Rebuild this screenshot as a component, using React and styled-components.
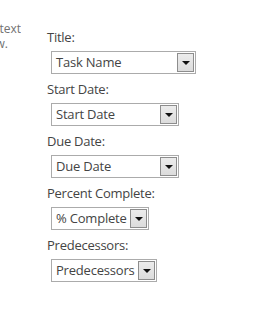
import styled, { createGlobalStyle } from "styled-components";

const GlobalStyle = createGlobalStyle`
  body {
    margin: 0;
    background: #ffffff;
    font-family: "Open Sans", "Noto Sans", sans-serif;
  }
`;

const fields = [
  { label: "Title:", value: "Task Name", width: 145 },
  { label: "Start Date:", value: "Start Date", width: 128 },
  { label: "Due Date:", value: "Due Date", width: 128 },
  { label: "Percent Complete:", value: "% Complete", width: 98 },
  { label: "Predecessors:", value: "Predecessors", width: 106 },
];

function App() {
  return (
    <Page>
      <GlobalStyle />
      <Note>
        <NoteText>
          <NoteLine>Choose the list columns that map to each text</NoteLine>
          <NoteLine>field of the task timeline view.</NoteLine>
        </NoteText>
      </Note>
      <Form>
        {fields.map((f) => (
          <Field key={f.label}>
            <Label>{f.label}</Label>
            <Select $width={f.width}>
              <Value>{f.value}</Value>
              <ArrowButton>
                <Arrow />
              </ArrowButton>
            </Select>
          </Field>
        ))}
      </Form>
    </Page>
  );
}

const Page = styled.div`
  width: 266px;
  height: 319px;
  display: flex;
  overflow: hidden;
`;

const Note = styled.div`
  width: 21px;
  flex-shrink: 0;
  padding-top: 21px;
  overflow: hidden;
  display: flex;
  justify-content: flex-end;
  align-items: flex-start;
`;

const NoteText = styled.div`
  width: 230px;
  flex-shrink: 0;
  display: flex;
  flex-direction: column;
  align-items: flex-end;
`;

const NoteLine = styled.div`
  white-space: nowrap;
  font-size: 12px;
  line-height: 15px;
  color: #727272;
  &:last-child {
    padding-right: 13px;
  }
`;

const Form = styled.div`
  margin-left: 26px;
  padding-top: 28px;
  display: flex;
  flex-direction: column;
  gap: 6px;
`;

const Field = styled.div`
  display: flex;
  flex-direction: column;
  gap: 5px;
`;

const Label = styled.div`
  font-size: 13px;
  line-height: 18px;
  letter-spacing: -0.25px;
  color: #444444;
`;

const Select = styled.div`
  margin-left: 4px;
  width: ${(p) => p.$width}px;
  height: 23px;
  box-sizing: border-box;
  border: 1px solid #ababab;
  display: flex;
  align-items: stretch;
  background: #ffffff;
`;

const Value = styled.div`
  flex: 1;
  padding-left: 4px;
  font-size: 13px;
  line-height: 21px;
  letter-spacing: -0.2px;
  color: #444444;
  white-space: nowrap;
  overflow: hidden;
`;

const ArrowButton = styled.div`
  width: 17px;
  margin: 1px;
  box-sizing: border-box;
  border: 1px solid #8d8d8d;
  background: linear-gradient(#ececec, #dcdcdc);
  display: flex;
  align-items: center;
  justify-content: center;
`;

const Arrow = styled.div`
  width: 0;
  height: 0;
  border-left: 4px solid transparent;
  border-right: 4px solid transparent;
  border-top: 4px solid #111111;
`;

export default App;
